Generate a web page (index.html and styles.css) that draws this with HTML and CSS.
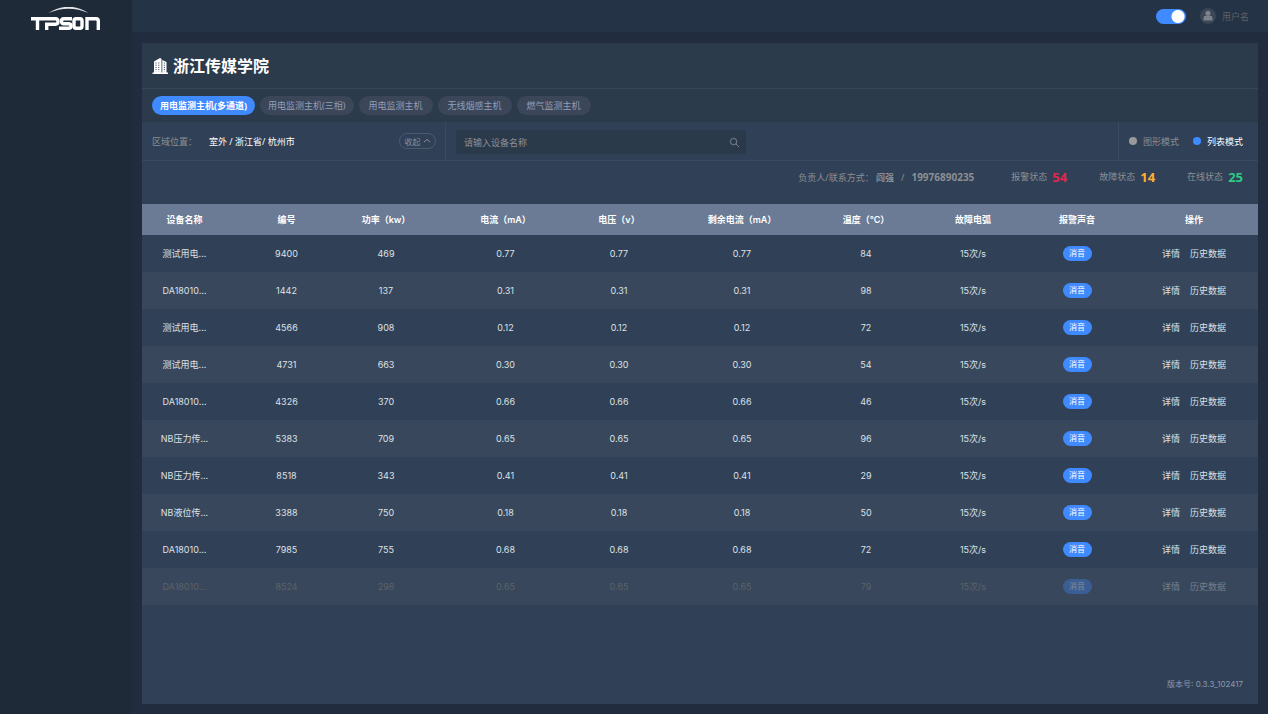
FILE: index.html
```html
<!DOCTYPE html>
<html lang="zh-CN">
<head>
    <meta charset="UTF-8">
    <meta name="viewport" content="width=device-width, initial-scale=1.0">
    <title>浙江传媒学院</title>
    <link rel="stylesheet" href="styles.css">
</head>
<body>
<div class="sidebar">
    <!--logo-->
    <svg class="logo" viewBox="0 0 70 24" role="img" aria-label="TPSON">
        <path d="M17.5 6Q37.5 -6.5 57.5 6Q37.5 -2.5 17.5 6Z" fill="#e4e8ec"/>
        <g fill="none" stroke="#fff" stroke-width="3.4">
            <path d="M0 11.7H14M6.5 11.7V23"/>
            <path d="M15.7 23V17.2H24.5Q27 17.2 27 14.5T24.5 11.7H14"/>
            <path d="M41 11.7H33Q30.5 11.7 30.5 14.3T33 16.7H37.5Q40 16.7 40 19T37.5 21.3H28"/>
            <path d="M45 11.7H49Q51 11.7 51 13.7V19.3Q51 21.3 49 21.3H45Q43 21.3 43 19.3V13.7Q43 11.7 45 11.7Z"/>
            <path d="M56 23V11.7H65Q67.3 11.7 67.3 14V23"/>
        </g>
    </svg>
</div>
<div class="main">
    <div class="topbar">
        <input type="checkbox" class="switch" aria-label="切换" checked>
        <div class="user">
            <svg class="avatar" viewBox="0 0 16 16">
                <circle cx="8" cy="8" r="8" fill="#3a4656"/>
                <circle cx="8" cy="5.2" r="2.5" fill="#7b828c"/>
                <path d="M3.5 12.5V10Q3.5 7.8 5.8 7.8H10.2Q12.5 7.8 12.5 10V12.5Z" fill="#7b828c"/>
            </svg>
            <span>用户名</span>
        </div>
    </div>

    <div class="panel">
        <div class="title">
            <svg class="building" viewBox="0 0 16 16">
                <path d="M.5 14.5H2V3.5L8 0L9.5 .8V14.5H10.3V2L14.5 4V14.5H16V16H.5Z" fill="#fff"/>
                <path d="M4 4.5V13.5M6.8 4.5V13.5M12.4 4.5V13.5" fill="none" stroke="#2b3b4c" stroke-width="1" stroke-dasharray="1 1.2"/>
            </svg>
            <h1>浙江传媒学院</h1>
        </div>
        <div class="tabs">
            <button type="button" class="tab active">用电监测主机(多通道)</button>
            <button type="button" class="tab">用电监测主机(三相)</button>
            <button type="button" class="tab">用电监测主机</button>
            <button type="button" class="tab">无线烟感主机</button>
            <button type="button" class="tab">燃气监测主机</button>
        </div>
        <div class="filter">
            <div class="area">
                <span>区域位置：</span>
                <span class="place">室外 / 浙江省/ 杭州市</span>
                <button type="button" class="fold">收起
                    <svg viewBox="0 0 8 8"><path d="M1 5L4 2.5L7 5" fill="none" stroke="currentColor"/></svg>
                </button>
            </div>
            <div class="search">
                <input type="text" aria-label="设备名称" placeholder="请输入设备名称">
                <svg viewBox="0 0 12 12"><circle cx="5" cy="5" r="3.5" fill="none" stroke="#7f8791"/><path d="M7.5 7.5L11 11" stroke="#7f8791"/></svg>
            </div>
            <div class="mode">
                <label><input type="radio" name="mode">图形模式</label>
                <label><input type="radio" name="mode" checked>列表模式</label>
            </div>
        </div>
        <div class="status">
            <div class="contact">负责人/联系方式： <b>阎强</b><i>/</i><b class="phone">19976890235</b></div>
            <div class="count">报警状态<b class="red">54</b></div>
            <div class="count">故障状态<b class="orange">14</b></div>
            <div class="count">在线状态<b class="green">25</b></div>
        </div>
        <table>
            <colgroup>
                <col class="c1"><col class="c2"><col class="c3"><col class="c4"><col class="c5">
                <col class="c6"><col class="c7"><col class="c8"><col class="c9"><col class="c10">
            </colgroup>
            <thead>
            <tr>
                <th>设备名称</th><th>编号</th><th>功率（kw）</th><th>电流（mA）</th><th>电压（v）</th>
                <th>剩余电流（mA）</th><th>温度（℃）</th><th>故障电弧</th><th>报警声音</th><th>操作</th>
            </tr>
            </thead>
            <tbody id="list"></tbody>
        </table>
        <div class="version">版本号: 0.3.3_102417</div>
    </div>
</div>

<script src="main.js"></script>
</body>
</html>
```

FILE: styles.css
```css
* {
    box-sizing: border-box;
}

body {
    margin: 0;
    min-height: 100vh;
    display: flex;
    background: #212d3e;
    font-family: "Noto Sans", "Noto Sans CJK SC", sans-serif;
    font-size: 9px;
    color: #8b8f94;
    text-spacing-trim: space-all;
}

button, input {
    font-family: inherit;
    font-size: 9px;
}

.sidebar {
    flex: 0 0 132px;
    background: #1e2a38;
    padding: 7px 0 0 31px;
}

.logo {
    display: block;
    width: 70px;
    height: 24px;
}

.main {
    flex: 1;
    min-width: 0;
    display: flex;
    flex-direction: column;
}

.topbar {
    height: 32px;
    background: #243346;
    display: flex;
    align-items: center;
    justify-content: flex-end;
    gap: 14px;
    padding-right: 19px;
}

.switch {
    appearance: none;
    width: 30px;
    height: 15px;
    margin: 0;
    border-radius: 8px;
    background: radial-gradient(circle at 22px 50%, #fff 6px, #3f8aff 7px);
}

.user {
    display: flex;
    align-items: center;
    gap: 6px;
    color: #5f6265;
}

.avatar {
    width: 16px;
    height: 16px;
}

.panel {
    flex: 1;
    margin: 11px 10px 10px;
    background: #304056;
    display: flex;
    flex-direction: column;
}

.title {
    height: 46px;
    background: #2b3b4c;
    border-bottom: 1px solid #34465a;
    display: flex;
    align-items: center;
    gap: 5px;
    padding-left: 10px;
}

.building {
    width: 16px;
    height: 16px;
}

h1 {
    margin: 0;
    font-size: 16px;
    line-height: 24px;
    color: #fff;
}

.tabs {
    height: 33px;
    background: #2b3b4c;
    display: flex;
    align-items: center;
    gap: 5px;
    padding-left: 10px;
}

.tab {
    min-width: 74px;
    height: 19px;
    padding: 0 8px;
    border: none;
    border-radius: 10px;
    background: #3b4658;
    color: #8f9fbe;
}

.tab.active {
    background: #3f8aff;
    color: #fff;
    font-weight: bold;
}

.filter {
    height: 39px;
    border-bottom: 1px solid #39495f;
    display: flex;
}

.area {
    width: 304px;
    border-right: 1px solid #3b4b5f;
    display: flex;
    align-items: center;
    padding: 0 9px 0 10px;
}

.place {
    margin-left: 12px;
    color: #fff;
}

.fold {
    margin-left: auto;
    width: 37px;
    height: 16px;
    padding: 0;
    border: 1px solid #4a5a6d;
    border-radius: 8px;
    background: none;
    color: #8b8f94;
    font-size: 8px;
    display: flex;
    align-items: center;
    justify-content: center;
    gap: 2px;
}

.fold svg {
    width: 8px;
    height: 8px;
}

.search {
    width: 290px;
    height: 24px;
    margin: 8px 0 0 10px;
    border-radius: 2px;
    background: #2b3a4b;
    display: flex;
    align-items: center;
    padding: 0 6px 0 8px;
}

.search input {
    flex: 1;
    min-width: 0;
    padding: 0;
    border: none;
    outline: none;
    background: none;
    color: #fff;
}

.search input::placeholder {
    color: #8b8f94;
}

.search svg {
    width: 11px;
    height: 11px;
}

.mode {
    margin-left: auto;
    border-left: 1px solid #3b4b5f;
    display: flex;
    align-items: center;
    gap: 14px;
    padding: 0 15px 0 10px;
}

.mode label {
    display: flex;
    align-items: center;
    gap: 6px;
}

.mode input {
    appearance: none;
    width: 8px;
    height: 8px;
    margin: 0;
    border-radius: 50%;
    background: #999;
}

.mode input:checked {
    background: #3f8aff;
}

.mode label:has(:checked) {
    color: #fff;
}

.status {
    height: 43px;
    display: flex;
    justify-content: flex-end;
    padding: 6px 15px 0 0;
    line-height: 20px;
}

.contact {
    margin-right: 5px;
}

.contact i {
    font-style: normal;
    margin: 0 7px;
}

.phone {
    font-size: 10px;
}

.count {
    display: flex;
    gap: 5px;
    margin-left: 32px;
}

.count b {
    font-size: 13px;
}

.red {
    color: #e0284f;
}

.orange {
    color: #ffae34;
}

.green {
    color: #2dcb83;
}

table {
    width: 100%;
    table-layout: fixed;
    border-collapse: collapse;
    font-family: Inter, "Noto Sans CJK SC", sans-serif;
    text-align: center;
    color: #dde1e6;
}

.c1 { width: 106px; }
.c2 { width: 77px; }
.c3 { width: 122px; }
.c4 { width: 117px; }
.c5 { width: 110px; }
.c6 { width: 136px; }
.c7 { width: 112px; }
.c8 { width: 102px; }
.c9 { width: 106px; }
.c10 { width: 128px; }

th, td {
    padding: 0;
    white-space: nowrap;
}

th:first-child, td:first-child {
    padding-right: 21px;
}

th {
    height: 31px;
    background: #6b7b95;
    color: #fff;
    font-weight: 600;
}

td {
    height: 37px;
}

tbody tr:nth-child(even) {
    background: #38475b;
}

.mute {
    display: block;
    width: 29px;
    height: 15px;
    margin: 0 auto;
    padding: 0;
    border: none;
    border-radius: 8px;
    background: #3f8aff;
    color: #fff;
    font-size: 8px;
    line-height: 15px;
}

td a {
    color: #dde1e6;
    text-decoration: none;
}

td a + a {
    margin-left: 10px;
}

/*离线设备*/
.offline td {
    color: #5c6269;
}

.offline a, .offline .mute {
    opacity: .35;
}

.version {
    margin-top: auto;
    padding: 0 15px 14px 0;
    font-family: Inter, "Noto Sans CJK SC", sans-serif;
    font-size: 8px;
    line-height: 12px;
    text-align: right;
    color: #8c9ab0;
}
```

FILE: main.js
```javascript
// 名称, 编号, 功率, 电流/电压/剩余电流, 温度
const devices = [
    ['测试用电...', 9400, 469, '0.77', 84],
    ['DA18010…', 1442, 137, '0.31', 98],
    ['测试用电...', 4566, 908, '0.12', 72],
    ['测试用电...', 4731, 663, '0.30', 54],
    ['DA18010…', 4326, 370, '0.66', 46],
    ['NB压力传...', 5383, 709, '0.65', 96],
    ['NB压力传...', 8518, 343, '0.41', 29],
    ['NB液位传...', 3388, 750, '0.18', 50],
    ['DA18010…', 7985, 755, '0.68', 72],
    ['DA18010…', 8524, 298, '0.65', 79, true]
];

document.querySelector('#list').innerHTML = devices.map(([name, id, power, value, temp, offline]) => `
    <tr class="${offline ? 'offline' : ''}">
        <td>${name}</td><td>${id}</td><td>${power}</td>
        <td>${value}</td><td>${value}</td><td>${value}</td>
        <td>${temp}</td><td>15次/s</td>
        <td><button type="button" class="mute">消音</button></td>
        <td><a href="#">详情</a><a href="#">历史数据</a></td>
    </tr>`).join('');
```
